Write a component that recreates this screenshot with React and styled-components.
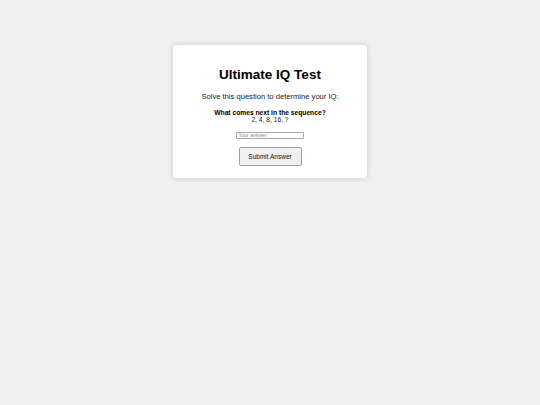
import React from "react";
import styled, { createGlobalStyle } from "styled-components";

const Global = createGlobalStyle`
  html, body {
    margin: 0;
    padding: 0;
    background: #f0f0f0;
    font-family: "Liberation Sans", Arial, sans-serif;
  }
  * { box-sizing: border-box; }
`;

const Page = styled.div`
  display: flex;
  justify-content: center;
  padding-top: 45px;
  min-height: 405px;
`;

const Card = styled.div`
  width: 194px;
  height: 133px;
  background: #ffffff;
  border-radius: 4px;
  box-shadow: 0 0 6px rgba(0, 0, 0, 0.16);
  padding: 22px 10px 0;
  display: flex;
  flex-direction: column;
  align-items: center;
  text-align: center;
  color: #222;
`;

const Title = styled.h1`
  margin: 0;
  font-size: 13.5px;
  line-height: 15px;
  font-weight: bold;
  color: #000;
`;

const Intro = styled.p`
  margin: 10px 0 0;
  font-size: 7.6px;
  line-height: 9px;
`;

const Question = styled.div`
  margin-top: 7.5px;
  font-size: 6.7px;
  line-height: 7.5px;
`;

const Strong = styled.div`
  font-weight: bold;
  color: #000;
`;

const Answer = styled.input`
  margin-top: 8px;
  width: 68px;
  height: 7.5px;
  padding: 0 1.5px;
  border: 1px solid #a8a8a8;
  border-radius: 1px;
  font-family: "Liberation Sans", Arial, sans-serif;
  font-size: 5.1px;
  line-height: 5.5px;
  outline: none;
  &::placeholder { color: #888; }
`;

const Submit = styled.button`
  margin-top: 7.5px;
  width: 63px;
  height: 19px;
  padding: 0;
  background: #efefef;
  border: 1px solid #a0a0a0;
  border-radius: 2px;
  font-family: "Liberation Sans", Arial, sans-serif;
  font-size: 6.5px;
  color: #111;
`;

export default function App() {
  return (
    <>
      <Global />
      <Page>
        <Card>
          <Title>Ultimate IQ Test</Title>
          <Intro>Solve this question to determine your IQ:</Intro>
          <Question>
            <Strong>What comes next in the sequence?</Strong>
            <div>2, 4, 8, 16, ?</div>
          </Question>
          <Answer placeholder="Your answer" />
          <Submit>Submit Answer</Submit>
        </Card>
      </Page>
    </>
  );
}
